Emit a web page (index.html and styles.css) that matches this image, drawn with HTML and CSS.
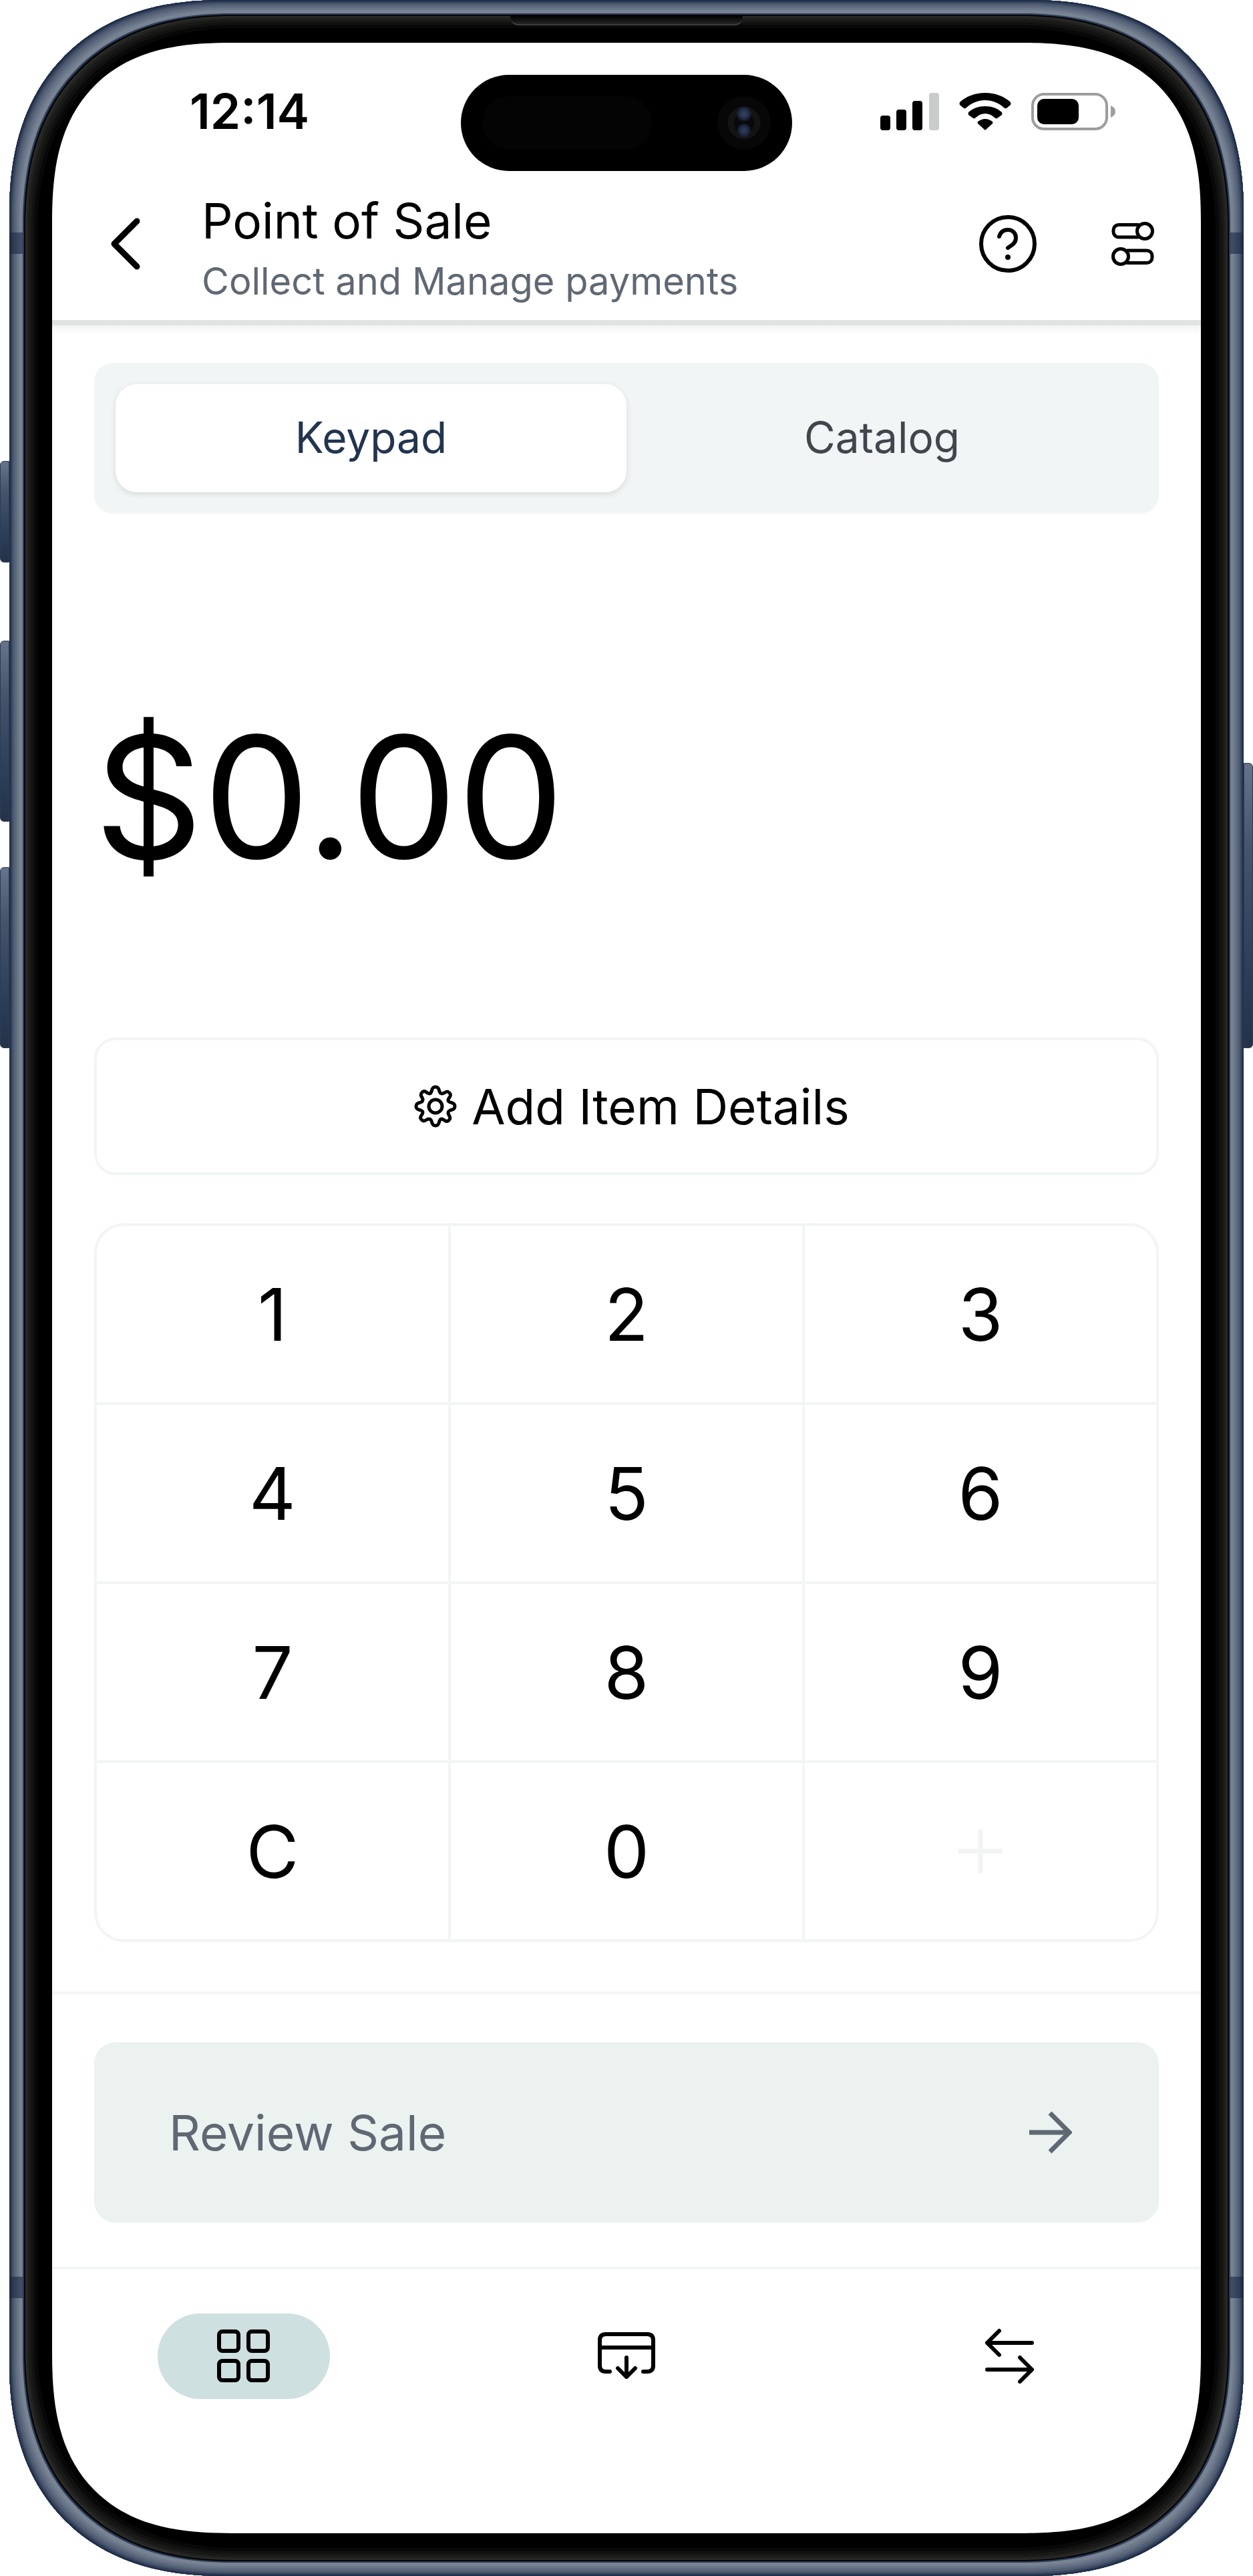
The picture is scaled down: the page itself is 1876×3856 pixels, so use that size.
FILE: index.html
```html
<!DOCTYPE html>
<html lang="en">
<head>
<meta charset="utf-8">
<meta name="viewport" content="width=device-width, initial-scale=1">
<title>Point of Sale</title>
<link rel="stylesheet" href="styles.css">
</head>
<body>
<div class="device">
  <span class="side-button side-button--action"></span>
  <span class="side-button side-button--volume-up"></span>
  <span class="side-button side-button--volume-down"></span>
  <span class="side-button side-button--power"></span>
  <div class="frame">
    <span class="antenna antenna--top-left"></span>
    <span class="antenna antenna--top-right"></span>
    <span class="antenna antenna--bottom-left"></span>
    <span class="antenna antenna--bottom-right"></span>
    <span class="earpiece"></span>
    <div class="screen">
      <div class="island">
        <span class="island-sensor"></span>
        <span class="island-camera"></span>
      </div>

      <div class="status-bar">
        <time class="clock">12:14</time>
        <div class="status-icons">
          <svg class="icon-signal" viewBox="0 0 88 56" aria-hidden="true">
            <rect x="0" y="34" width="15" height="22" rx="4"/>
            <rect x="24" y="25" width="15" height="31" rx="4"/>
            <rect x="48" y="12" width="15" height="44" rx="4"/>
            <rect x="73" y="0" width="15" height="56" rx="4" fill="#c9cccb"/>
          </svg>
          <svg class="icon-wifi" viewBox="0 0 78 56" aria-hidden="true">
            <path d="M39 0C54 0 67 5 77 14Q78 16 77 18L71 23Q69 24 67 22C59 15 50 11 39 11S19 15 11 22Q9 24 7 23L1 18Q0 16 1 14C11 5 24 0 39 0Z"/>
            <path d="M39 20C49 20 57 23 64 29Q65 31 64 33L57 38Q55 39 53 37C49 33 44 31 39 31S29 33 25 37Q23 39 21 38L14 33Q13 31 14 29C21 23 29 20 39 20Z"/>
            <path d="M39 39C43 39 47 41 50 43Q51 45 50 46L40 55Q39 56 38 55L28 46Q27 45 28 43C31 41 35 39 39 39Z"/>
          </svg>
          <svg class="icon-battery" viewBox="0 0 128 56" aria-hidden="true">
            <rect x="2" y="2" width="111" height="52" rx="17" fill="none" stroke="#9b9e9d" stroke-width="4"/>
            <rect x="9" y="9" width="62" height="38" rx="10"/>
            <path d="M119 19Q126 22 126 28T119 37Z" fill="#9b9e9d"/>
          </svg>
        </div>
      </div>

      <header class="app-header">
        <button class="icon-button" type="button" aria-label="Back">
          <svg class="icon-back" viewBox="0 0 44 78"><path d="M39 5L5 39L39 73"/></svg>
        </button>
        <div class="heading">
          <h1 class="title">Point of Sale</h1>
          <p class="subtitle">Collect and Manage payments</p>
        </div>
        <div class="actions">
          <button class="icon-button" type="button" aria-label="Help">
            <svg class="icon-help" viewBox="0 0 86 86">
              <circle cx="43" cy="43" r="40"/>
              <path d="M30 32C32 25 37 22 43 22C50 22 55 27 55 34C55 42 49 45 43 49"/>
              <circle class="dot" cx="43" cy="63" r="4"/>
            </svg>
          </button>
          <button class="icon-button" type="button" aria-label="Settings">
            <svg class="icon-sliders" viewBox="0 0 64 66">
              <path d="M40 4.500H11A8 8 0 0 0 3 12.500V15A8 8 0 0 0 11 23H40"/>
              <ellipse cx="50" cy="14" rx="11.500" ry="11.500"/>
              <path d="M24 43H53A8 8 0 0 1 61 51V53.500A8 8 0 0 1 53 61.500H24"/>
              <ellipse cx="14" cy="52" rx="11.500" ry="11.500"/>
            </svg>
          </button>
        </div>
      </header>

      <main class="content">
        <div class="tabs" role="tablist">
          <button class="tab tab--active" type="button" role="tab" aria-selected="true">Keypad</button>
          <button class="tab" type="button" role="tab" aria-selected="false">Catalog</button>
        </div>

        <output class="amount">$0.00</output>

        <button class="details-button" type="button">
          <svg class="icon-gear" viewBox="0 0 64 64" aria-hidden="true">
            <path d="M32 3C37 3 37 7 38 10C39 13 42 14 45 12C48 10 50 9 53 12C56 15 54 17 52 20C50 23 51 25 54 26C57 27 61 27 61 32C61 37 57 37 54 38C51 39 50 42 52 45C54 48 55 50 52 53C49 56 47 54 44 52C41 50 39 51 38 54C37 57 37 61 32 61C27 61 27 57 26 54C25 51 22 50 19 52C16 54 14 55 11 52C8 49 10 47 12 44C14 41 13 39 10 38C7 37 3 37 3 32C3 27 7 27 10 26C13 25 14 22 12 19C10 16 9 14 12 11C15 8 17 10 20 12C23 14 25 13 26 10C27 7 27 3 32 3Z"/>
            <circle cx="32" cy="32" r="10"/>
          </svg>
          Add Item Details
        </button>

        <div class="keypad">
          <button class="key" type="button">1</button>
          <button class="key" type="button">2</button>
          <button class="key" type="button">3</button>
          <button class="key" type="button">4</button>
          <button class="key" type="button">5</button>
          <button class="key" type="button">6</button>
          <button class="key" type="button">7</button>
          <button class="key" type="button">8</button>
          <button class="key" type="button">9</button>
          <button class="key" type="button">C</button>
          <button class="key" type="button">0</button>
          <button class="key" type="button" aria-label="Add" disabled>
            <svg class="icon-plus" viewBox="0 0 66 66"><path d="M33 0V66M0 33H66"/></svg>
          </button>
        </div>
      </main>

      <div class="checkout">
        <button class="review-button" type="button" disabled>
          Review Sale
          <svg class="icon-arrow" viewBox="0 0 64 64" aria-hidden="true"><path d="M0 32H60M31 3L60 32L31 61"/></svg>
        </button>
      </div>

      <nav class="nav">
        <a class="nav-item nav-item--active" href="#sale" aria-label="Sale">
          <svg class="icon-nav" viewBox="0 0 88 88">
            <rect x="7" y="7" width="29" height="29" rx="5"/>
            <rect x="51" y="7" width="29" height="29" rx="5"/>
            <rect x="7" y="51" width="29" height="29" rx="5"/>
            <rect x="51" y="51" width="29" height="29" rx="5"/>
          </svg>
        </a>
        <a class="nav-item" href="#payouts" aria-label="Payouts">
          <svg class="icon-nav" viewBox="0 0 88 88">
            <path d="M19 67H13Q4 67 4 58V20Q4 11 13 11H75Q84 11 84 20V58Q84 67 75 67H69M4 31H84M44 46V75M31 62L44 75L57 62"/>
          </svg>
        </a>
        <a class="nav-item" href="#transfers" aria-label="Transfers">
          <svg class="icon-nav" viewBox="0 0 88 88">
            <path d="M78 24H11M29 6L11 24L29 42M11 64H78M60 46L78 64L60 82"/>
          </svg>
        </a>
      </nav>
    </div>
  </div>
</div>
</body>
</html>
```
FILE: styles.css
```css
:root {
  --line: #f1f5f4;
  --ink: #000;
  --muted: #5f6873;
}

* {
  box-sizing: border-box;
}

body {
  margin: 0;
  background: #fff;
  color: var(--ink);
  font-family: Inter, "Liberation Sans", sans-serif;
}

button {
  margin: 0;
  padding: 0;
  border: 0;
  background: none;
  color: inherit;
  font: inherit;
  cursor: pointer;
}

svg {
  display: block;
  flex: none;
}

/* Device shell */

.device {
  position: relative;
  padding: 0 14px;
}

.frame {
  position: relative;
  padding: 64px;
  border-radius: 292px;
  background: #000;
  box-shadow:
    inset 0 0 0 2px #1f2e48,
    inset 0 0 0 4px #33415a,
    inset 0 0 0 6px #445068,
    inset 0 0 0 9px #535f74,
    inset 0 0 0 12px #606c80,
    inset 0 0 0 15px #6c788a,
    inset 0 0 0 20px #778292,
    inset 0 0 0 22px #2b3b58,
    inset 0 0 0 24px #050505,
    inset 0 0 0 26px #2b2b2a,
    inset 0 0 0 29px #222221,
    inset 0 0 0 33px #191918,
    inset 0 0 0 37px #111110,
    inset 0 0 0 42px #080808;
}

.antenna {
  position: absolute;
  width: 20px;
  height: 32px;
  background: #1b274499;
}

.antenna--top-left { top: 348px; left: 0; }
.antenna--top-right { top: 348px; right: 0; }
.antenna--bottom-left { bottom: 416px; left: 0; }
.antenna--bottom-right { bottom: 416px; right: 0; }

.earpiece {
  position: absolute;
  top: 23px;
  left: 50%;
  width: 348px;
  height: 15px;
  border-bottom: 2px solid #3c3e42;
  border-radius: 0 0 12px 12px;
  background: linear-gradient(#000, #242424);
  transform: translateX(-50%);
}

.side-button {
  position: absolute;
  width: 14px;
  border: 1px solid #2c3c57;
  background: linear-gradient(#66738a, #46536b 30%, #2f3f5a 70%, #243249);
}

.side-button--action { top: 690px; left: 0; height: 152px; border-radius: 6px 0 0 6px; }
.side-button--volume-up { top: 959px; left: 0; height: 271px; border-radius: 6px 0 0 6px; }
.side-button--volume-down { top: 1298px; left: 0; height: 271px; border-radius: 6px 0 0 6px; }
.side-button--power { top: 1142px; right: 0; height: 427px; border-radius: 0 6px 6px 0; }

.screen {
  position: relative;
  overflow: hidden;
  border-radius: 230px;
  background: #fff;
}

/* Continuous corners, where the browser can draw them */
@supports (corner-shape: superellipse(1.2)) {
  .frame {
    border-radius: 320px;
    corner-shape: superellipse(1.2);
  }

  .screen {
    border-radius: 270px;
    corner-shape: superellipse(1.36);
  }
}

.island {
  position: absolute;
  top: 48px;
  left: 50%;
  display: flex;
  align-items: center;
  justify-content: space-between;
  width: 496px;
  height: 144px;
  padding: 0 32px;
  border-radius: 72px;
  background: #000;
  transform: translateX(-50%);
}

.island-sensor {
  width: 254px;
  height: 80px;
  border-radius: 40px;
  background: #040404;
}

.island-camera {
  width: 80px;
  height: 80px;
  border-radius: 50%;
  background:
    radial-gradient(circle at 50% 33%, #2f3c5a 0 3px, #1a233a 9px, transparent 12px),
    radial-gradient(circle at 50% 64%, #2b3852 0 3px, #1a233a 8px, transparent 11px),
    radial-gradient(circle, #08090c 0 15px, #131313 16px 24px, #070707 25px);
}

/* Status bar */

.status-bar {
  display: flex;
  align-items: center;
  justify-content: space-between;
  height: 211px;
  padding: 0 126px 5px 206px;
}

.clock {
  font-size: 73px;
  font-weight: 600;
  line-height: 88px;
}

.status-icons {
  display: flex;
  gap: 30px;
}

.icon-signal { width: 88px; height: 56px; }
.icon-wifi { width: 78px; height: 56px; }
.icon-battery { width: 128px; height: 56px; }

/* Header */

.app-header {
  display: flex;
  align-items: center;
  padding: 0 70px 24px 88px;
  border-bottom: 8px solid #e0e3e2;
}

.heading {
  flex: 1;
  padding-left: 92px;
}

.title {
  margin: 0;
  font-size: 73px;
  font-weight: 400;
  line-height: 112px;
}

.subtitle {
  margin: 0;
  color: var(--muted);
  font-size: 56px;
  line-height: 68px;
}

.actions {
  display: flex;
  align-items: center;
  gap: 112px;
}

.icon-button svg {
  fill: none;
  stroke: currentColor;
  stroke-width: 6;
  stroke-linecap: round;
  stroke-linejoin: round;
}

.icon-button .icon-back {
  width: 44px;
  height: 78px;
  stroke-width: 9;
}

.icon-help { width: 86px; height: 86px; }
.icon-help .dot { fill: currentColor; stroke: none; }
.icon-button .icon-sliders { width: 64px; height: 66px; stroke-width: 5; }

/* Content */

.content {
  display: flex;
  flex-direction: column;
  padding: 56px 63px 74px;
  background: linear-gradient(#f1f4f3, #fff 14px);
}

.tabs {
  display: grid;
  grid-template-columns: 1fr 1fr;
  padding: 32px;
  border-radius: 28px;
  background: #f2f5f5;
}

.tab {
  height: 162px;
  padding-bottom: 4px;
  border-radius: 32px;
  color: #3f474c;
  font-size: 64px;
}

.tab--active {
  background: #fff;
  box-shadow: 0 3px 8px #d5dad9;
  color: #22344f;
}

.amount {
  margin: 264px 0 200px;
  font-size: 254px;
  line-height: 320px;
}

.details-button {
  display: flex;
  align-items: center;
  justify-content: center;
  gap: 22px;
  height: 206px;
  padding-left: 16px;
  border: 4px solid var(--line);
  border-radius: 32px;
  font-size: 73px;
}

.icon-gear {
  width: 64px;
  height: 64px;
  fill: none;
  stroke: currentColor;
  stroke-width: 5;
}

.keypad {
  display: grid;
  grid-template-columns: repeat(3, 1fr);
  grid-auto-rows: 264px;
  gap: 4px;
  margin-top: 72px;
  overflow: hidden;
  border: 4px solid var(--line);
  border-radius: 44px;
  background: var(--line);
}

.key {
  display: grid;
  place-items: center;
  background: #fff;
  font-size: 108px;
}

.icon-plus {
  width: 66px;
  height: 66px;
  stroke: #f1f4f3;
  stroke-width: 7;
}

/* Footer */

.checkout {
  padding: 72px 63px 66px;
  border-top: 4px solid var(--line);
}

.review-button {
  display: flex;
  align-items: center;
  justify-content: space-between;
  width: 100%;
  height: 270px;
  padding: 0 130px 0 112px;
  border-radius: 32px;
  background: #ebf2f0;
  color: var(--muted);
  font-size: 73px;
}

.icon-arrow {
  width: 64px;
  height: 64px;
  fill: none;
  stroke: currentColor;
  stroke-width: 7;
}

.nav {
  display: grid;
  grid-template-columns: repeat(3, 1fr);
  justify-items: center;
  padding: 66px 0 201px;
  border-top: 4px solid var(--line);
}

.nav-item {
  display: grid;
  place-items: center;
  width: 258px;
  height: 128px;
  border-radius: 64px;
  color: var(--ink);
}

.nav-item--active {
  background: #cee0df;
}

.icon-nav {
  width: 88px;
  height: 88px;
  fill: none;
  stroke: currentColor;
  stroke-width: 6;
  stroke-linecap: round;
  stroke-linejoin: round;
}
```
